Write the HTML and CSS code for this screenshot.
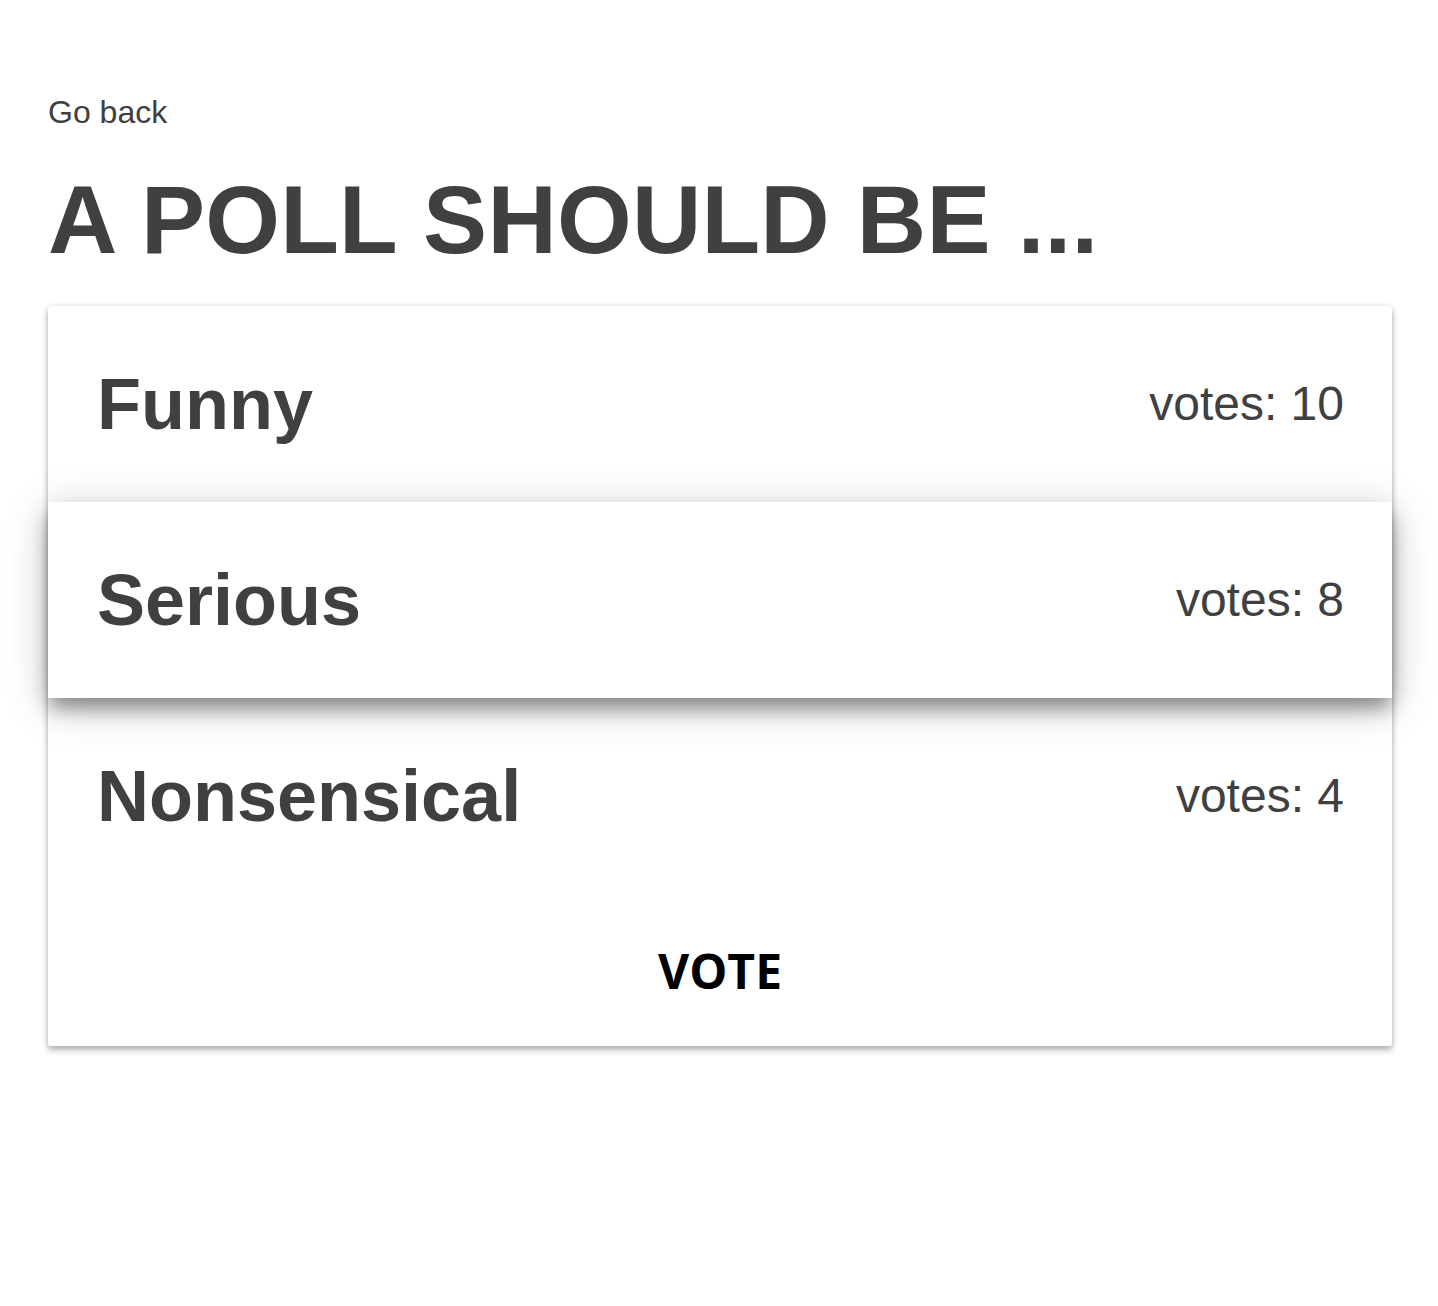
FILE: index.html
```html
<!DOCTYPE html>
<html lang="en">
<head>
<meta charset="utf-8">
<title>A poll should be ...</title>
<link rel="stylesheet" href="styles.css">
</head>
<body>
<div class="page">
  <a class="back" href="#">Go back</a>
  <h1 class="title">A POLL SHOULD BE ...</h1>
  <div class="card">
    <div class="option">
      <span class="option-name">Funny</span>
      <span class="option-votes">votes: 10</span>
    </div>
    <div class="option option-selected">
      <span class="option-name">Serious</span>
      <span class="option-votes">votes: 8</span>
    </div>
    <div class="option">
      <span class="option-name">Nonsensical</span>
      <span class="option-votes">votes: 4</span>
    </div>
    <div class="actions">
      <button class="vote" type="button">VOTE</button>
    </div>
  </div>
</div>
</body>
</html>
```
FILE: styles.css
```css
html, body {
  margin: 0;
  padding: 0;
  background: #ffffff;
}
body {
  font-family: "Liberation Sans", Arial, Helvetica, sans-serif;
  color: #404040;
}
.page {
  padding: 94px 46px 200px 48px;
}
.back {
  display: block;
  font-size: 32px;
  line-height: 37px;
  color: #404040;
  text-decoration: none;
}
.title {
  margin: 34px 0 31px;
  font-size: 96px;
  line-height: 110px;
  font-weight: 700;
  letter-spacing: 0.25px;
  color: #404040;
}
.card {
  position: relative;
  background: #fff;
  border-radius: 4px 4px 2px 2px;
  box-shadow: 0 4px 6px rgba(0,0,0,0.28), 0 0 6px rgba(0,0,0,0.12);
}
.option {
  height: 196px;
  display: flex;
  align-items: center;
  justify-content: space-between;
  padding: 0 48px 0 49px;
  background: #fff;
  border-radius: 4px 4px 0 0;
}
.option-selected {
  position: relative;
  z-index: 1;
  border-radius: 0;
  box-shadow: 0 12px 18px -2px rgba(0,0,0,0.38), 0 8px 40px rgba(0,0,0,0.22);
}
.option-name {
  font-size: 72px;
  font-weight: 700;
  line-height: 1;
}
.option-votes {
  font-size: 48px;
  line-height: 1;
}
.actions {
  height: 152px;
  display: flex;
  align-items: center;
  justify-content: center;
}
.vote {
  border: none;
  background: none;
  padding: 0;
  font-family: "Open Sans", "Noto Sans", sans-serif;
  font-weight: 700;
  font-size: 48px;
  color: #000;
  cursor: pointer;
}
```
